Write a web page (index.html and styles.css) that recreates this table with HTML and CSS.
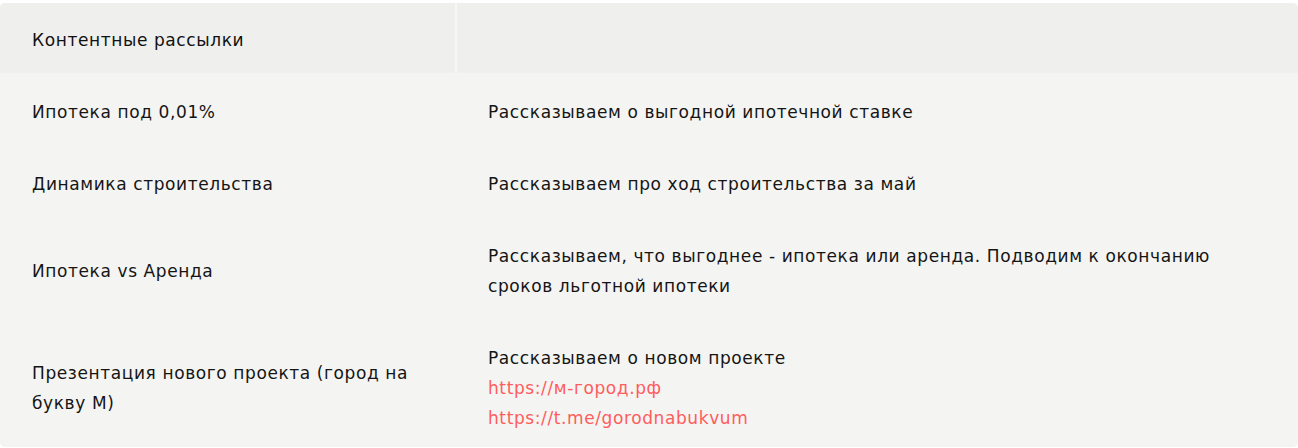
FILE: index.html
```html
<!DOCTYPE html>
<html lang="ru">
<head>
<meta charset="utf-8">
<title>Контентные рассылки</title>
<link rel="stylesheet" href="styles.css">
</head>
<body>
<div class="wrap">
<table class="mail-table">
  <thead>
    <tr>
      <th class="col-a">Контентные рассылки</th>
      <th class="col-b"></th>
    </tr>
  </thead>
  <tbody>
    <tr>
      <td class="col-a">Ипотека под 0,01%</td>
      <td class="col-b">Рассказываем о выгодной ипотечной ставке</td>
    </tr>
    <tr>
      <td class="col-a">Динамика строительства</td>
      <td class="col-b">Рассказываем про ход строительства за май</td>
    </tr>
    <tr>
      <td class="col-a">Ипотека vs Аренда</td>
      <td class="col-b">Рассказываем, что выгоднее - ипотека или аренда. Подводим к окончанию сроков льготной ипотеки</td>
    </tr>
    <tr>
      <td class="col-a">Презентация нового проекта (город на букву М)</td>
      <td class="col-b">Рассказываем о новом проекте<br><a class="link" href="#">https://м-город.рф</a><br><a class="link" href="#">https://t.me/gorodnabukvum</a></td>
    </tr>
  </tbody>
</table>
</div>
</body>
</html>
```

FILE: styles.css
```css
html, body {
  margin: 0;
  padding: 0;
  background: #ffffff;
}

.wrap {
  padding-top: 3px;
}

.mail-table {
  width: 1298px;
  border-collapse: separate;
  border-spacing: 0;
  border-radius: 5px;
  overflow: hidden;
  background: #f4f4f2;
  font-family: "DejaVu Sans", sans-serif;
  font-size: 17px;
  letter-spacing: 0.6px;
  line-height: 30px;
  color: #151515;
  table-layout: fixed;
}

.mail-table th {
  background: #efefed;
  font-weight: 400;
  text-align: left;
  height: 70px;
  padding: 4px 20px 0 32px;
  box-sizing: border-box;
  vertical-align: middle;
  color: #111111;
}

.mail-table th.col-a {
  width: 457px;
  border-right: 2px solid #f7f7f5;
}

.mail-table td {
  padding: 24px 40px 18px 32px;
  vertical-align: middle;
  text-align: left;
}

.mail-table td.col-b {
  padding-left: 31px;
}

.mail-table tbody tr:last-child td {
  padding-bottom: 14px;
}

.link {
  color: #ff5c5c;
  text-decoration: none;
}
```
